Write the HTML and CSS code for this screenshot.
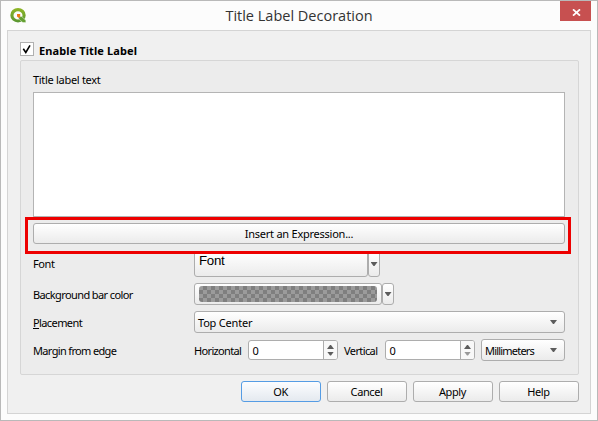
FILE: index.html
```
<!DOCTYPE html>
<html lang="en">
<head>
<meta charset="utf-8">
<title>Title Label Decoration</title>
<link rel="stylesheet" href="styles.css">
</head>
<body>
<div class="window">
  <header class="titlebar">
    <svg class="logo" width="17" height="16" viewBox="0 0 17 16">
      <defs><linearGradient id="g" x1="0" y1="0" x2="0" y2="1"><stop offset="0" stop-color="#90b625"/><stop offset="1" stop-color="#589632"/></linearGradient></defs>
      <path fill-rule="evenodd" d="M8 0a7.700 7.200 0 1 0 0 14.400a7.700 7.200 0 1 0 0-14.400zM8 3.200a4.500 4.200 0 1 1 0 8.400a4.500 4.200 0 1 1 0-8.400z" fill="url(#g)"/>
      <path d="M8.800 8.600h2.800l4.200 3.600v2.300h-3L8.800 11z" fill="#63a031" stroke="#fcfcfc" stroke-width=".4"/>
      <path d="M7 6h3.200v2.600L9 10L7 8.600z" fill="#ee7913"/>
    </svg>
    <h1 class="caption">Title Label Decoration</h1>
    <button class="close" aria-label="Close"><svg width="9" height="7" viewBox="0 0 9 7"><path d="M1 .4L8 6.600M8 .4L1 6.600" stroke="#fff" stroke-width="1.800"/></svg></button>
  </header>
  <main class="client">
    <div class="enable"><span class="check"><svg width="12" height="12" viewBox="0 0 12 12"><path d="M2.300 5.800L4.800 9.400L9 2.300" fill="none" stroke="#000" stroke-width="1.600"/></svg></span><b class="t-enable">Enable Title Label</b></div>
    <section class="group">
      <div class="text-label"><span class="t-text">Title label text</span></div>
      <div class="textarea"></div>
      <div class="expression"><div class="btn wide"><span class="t-expr">Insert an Expression...</span></div><div class="highlight"></div></div>
      <div class="row font-row"><label class="name t-font">Font</label><div class="btn font-btn"><span class="sample">Font</span></div><div class="btn drop font-drop"><i class="arrow"></i></div></div>
      <div class="row color-row"><label class="name t-bg">Background bar color</label><div class="btn color-btn"><span class="swatch"></span></div><div class="btn drop"><i class="arrow"></i></div></div>
      <div class="row place-row"><label class="name t-place"><u>P</u>lacement</label><div class="btn combo"><span class="t-top">Top Center</span><i class="arrow"></i></div></div>
      <div class="row margin-row"><label class="name t-margin">Margin from edge</label><span class="horizontal">Horizontal</span>
        <div class="spin"><span class="value">0</span><span class="steps"><i class="arrow up"></i><i class="arrow"></i></span></div>
        <span class="vertical">Vertical</span>
        <div class="spin"><span class="value">0</span><span class="steps"><i class="arrow up"></i><i class="arrow off"></i></span></div>
        <div class="btn combo units"><span class="t-mm">Millimeters</span><i class="arrow"></i></div>
      </div>
    </section>
    <footer class="actions"><div class="btn ok">OK</div><div class="btn">Cancel</div><div class="btn">Apply</div><div class="btn">Help</div></footer>
  </main>
</div>
</body>
</html>
```
FILE: styles.css
```
* { box-sizing: border-box; }
body { margin: 0; font: 11px/14px "Noto Sans", sans-serif; color: #000; }
.window { width: 598px; height: 421px; padding: 0 6px 6px 6px; border: 1px solid #b9b9b9; background: #fcfcfc; display: flex; flex-direction: column; }
.titlebar { height: 29px; flex: none; display: flex; align-items: flex-start; padding-left: 3px; }
.logo { margin-top: 7px; }
.caption { margin: 5px 0 0; flex: 1; padding-left: 11px; text-align: center; font: 14.5px/20px "Open Sans", sans-serif; color: #333; white-space: nowrap; }
.close { width: 31px; height: 20px; padding: 2px 0 0 1px; border: 0; background: #c75050; display: flex; align-items: center; justify-content: center; }
.client { flex: 1; border: 1px solid #d4d4d4; background: #f0f0f0; padding: 11px 11px 0 12px; white-space: nowrap; }
.enable { height: 18px; display: flex; }
.check { width: 14px; height: 14px; border: 1px solid #b0b0b0; background: #fff; display: flex; }
.enable b { margin: 2px 0 0 5px; letter-spacing: .1px; }
.group { height: 315px; width: 559px; border: 1px solid #d6d6d6; border-radius: 2px; background: #ececec; padding: 0 13px 0 12px; }
.text-label { height: 31px; padding-top: 12px; letter-spacing: -.3px; }
.textarea { height: 125px; border: 1px solid #b4b4b4; background: #fff; }
.expression { position: relative; padding-top: 6px; height: 34px; }
.highlight { position: absolute; left: -8px; top: 0; width: 546px; height: 37px; border: 3px solid #ed0000; }
.btn { height: 21px; border: 1px solid #adadad; border-radius: 3px; background: linear-gradient(#fff, #ebebeb); display: flex; align-items: center; justify-content: center; }
.row { display: flex; align-items: center; }
.name { width: 161px; flex: none; }
.t-expr { letter-spacing: -.24px; }
.t-font { letter-spacing: -.4px; }
.t-bg { letter-spacing: -.6px; }
.t-place { letter-spacing: -.6px; }
.t-margin { letter-spacing: -.65px; }
.t-top { letter-spacing: -.2px; }
.t-mm { letter-spacing: -.8px; }
.color-row .name, .place-row .name, .t-top, .t-margin, .horizontal, .vertical, .value, .t-mm { padding-top: 2px; }
.font-row { height: 26px; }
.font-btn { width: 174px; height: 26px; justify-content: flex-start; align-items: flex-start; padding-left: 4px; }
.sample { font: 13.3px/18px "Liberation Sans", sans-serif; letter-spacing: -.3px; }
.drop { width: 12px; height: 22px; }
.font-drop { height: 26px; }
.color-row { height: 22px; margin-top: 6px; }
.color-btn { width: 188px; height: 22px; padding: 0 4px; }
.swatch { flex: 1; height: 16px; border-radius: 3px; background: conic-gradient(#7f7f7f 25%, #9b9b9b 0 50%, #7f7f7f 0 75%, #9b9b9b 0) 0 0 / 8px 8px; }
.place-row { height: 22px; margin-top: 6px; }
.combo { flex: 1; height: 22px; justify-content: space-between; padding: 0 7px 0 3px; }
.margin-row { height: 22px; margin-top: 6px; }
.arrow { display: block; flex: none; width: 7px; height: 4px; background: #5c5c5c; clip-path: polygon(0 0, 100% 0, 57% 100%, 43% 100%); }
.up { transform: scaleY(-1); }
.off { background: #999; }
.horizontal { width: 54px; letter-spacing: -.65px; }
.vertical { width: 41px; margin-left: 6px; letter-spacing: -.6px; }
.spin { width: 90px; height: 20px; border: 1px solid #adadad; border-radius: 3px; background: #fff; display: flex; justify-content: space-between; align-items: center; }
.value { padding-left: 3.5px; }
.steps { width: 14px; height: 18px; border-left: 1px solid #adadad; border-radius: 0 2px 2px 0; background: #f8f8f8; display: flex; flex-direction: column; align-items: center; justify-content: center; gap: 3px; }
.units { margin-left: 6px; }
.actions { display: flex; justify-content: flex-end; gap: 6px; margin-top: 6px; letter-spacing: -.4px; }
.actions .btn { width: 80px; padding-right: 1px; }
.actions .ok { border-color: #559ce4; background: linear-gradient(#fcfdff, #e4e9ef); }
```
